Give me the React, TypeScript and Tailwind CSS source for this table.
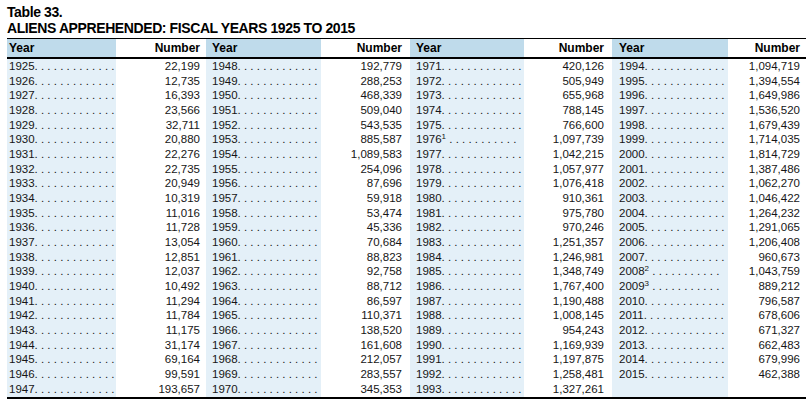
const groups: { rows: [string, string, string?][]; yearW: string; numW: string; yearPl: string; numPr: string }[] = [
  {
    yearW: 'w-[109px]',
    numW: 'w-[90px]',
    yearPl: 'pl-[2px]',
    numPr: 'pr-[6px]',
    rows: [
      ['1925', '22,199'], ['1926', '12,735'], ['1927', '16,393'], ['1928', '23,566'], ['1929', '32,711'],
      ['1930', '20,880'], ['1931', '22,276'], ['1932', '22,735'], ['1933', '20,949'], ['1934', '10,319'],
      ['1935', '11,016'], ['1936', '11,728'], ['1937', '13,054'], ['1938', '12,851'], ['1939', '12,037'],
      ['1940', '10,492'], ['1941', '11,294'], ['1942', '11,784'], ['1943', '11,175'], ['1944', '31,174'],
      ['1945', '69,164'], ['1946', '99,591'], ['1947', '193,657'],
    ],
  },
  {
    yearW: 'w-[115px]',
    numW: 'w-[89px]',
    yearPl: 'pl-[6px]',
    numPr: 'pr-[8px]',
    rows: [
      ['1948', '192,779'], ['1949', '288,253'], ['1950', '468,339'], ['1951', '509,040'], ['1952', '543,535'],
      ['1953', '885,587'], ['1954', '1,089,583'], ['1955', '254,096'], ['1956', '87,696'], ['1957', '59,918'],
      ['1958', '53,474'], ['1959', '45,336'], ['1960', '70,684'], ['1961', '88,823'], ['1962', '92,758'],
      ['1963', '88,712'], ['1964', '86,597'], ['1965', '110,371'], ['1966', '138,520'], ['1967', '161,608'],
      ['1968', '212,057'], ['1969', '283,557'], ['1970', '345,353'],
    ],
  },
  {
    yearW: 'w-[114px]',
    numW: 'w-[88px]',
    yearPl: 'pl-[6px]',
    numPr: 'pr-[8px]',
    rows: [
      ['1971', '420,126'], ['1972', '505,949'], ['1973', '655,968'], ['1974', '788,145'], ['1975', '766,600'],
      ['1976', '1,097,739', '1'], ['1977', '1,042,215'], ['1978', '1,057,977'], ['1979', '1,076,418'], ['1980', '910,361'],
      ['1981', '975,780'], ['1982', '970,246'], ['1983', '1,251,357'], ['1984', '1,246,981'], ['1985', '1,348,749'],
      ['1986', '1,767,400'], ['1987', '1,190,488'], ['1988', '1,008,145'], ['1989', '954,243'], ['1990', '1,169,939'],
      ['1991', '1,197,875'], ['1992', '1,258,481'], ['1993', '1,327,261'],
    ],
  },
  {
    yearW: 'w-[116px]',
    numW: 'w-[78px]',
    yearPl: 'pl-[7px]',
    numPr: 'pr-[6px]',
    rows: [
      ['1994', '1,094,719'], ['1995', '1,394,554'], ['1996', '1,649,986'], ['1997', '1,536,520'], ['1998', '1,679,439'],
      ['1999', '1,714,035'], ['2000', '1,814,729'], ['2001', '1,387,486'], ['2002', '1,062,270'], ['2003', '1,046,422'],
      ['2004', '1,264,232'], ['2005', '1,291,065'], ['2006', '1,206,408'], ['2007', '960,673'], ['2008', '1,043,759', '2'],
      ['2009', '889,212', '3'], ['2010', '796,587'], ['2011', '678,606'], ['2012', '671,327'], ['2013', '662,483'],
      ['2014', '679,996'], ['2015', '462,388'], ['', ''],
    ],
  },
];

const DOTS = ' . . . . . . . . . . . .';

export default function App() {
  return (
    <div className="w-[812px] h-[401px] bg-white pl-[7px] pt-[4px] text-[#161616] font-['Liberation_Sans',Arial,sans-serif]">
      <div className="h-[34px] text-[14px] leading-4 font-bold tracking-[-0.4px] text-black">
        <div>Table 33.</div>
        <div>ALIENS APPREHENDED: FISCAL YEARS 1925 TO 2015</div>
      </div>
      <div className="w-[799px] flex flex-col">
        <div className="h-[1px] bg-black" />
        {/* header */}
        <div className="flex h-[18px] text-[12px] font-bold leading-[18px] text-black">
          {groups.map((g, i) => (
            <div key={i} className="flex">
              <div className={`${g.yearW} ${g.yearPl} bg-[#bfdbeb]`}>Year</div>
              <div className={`${g.numW} ${g.numPr} text-right`}>Number</div>
            </div>
          ))}
        </div>
        <div className="h-[2px] bg-black" />
        {/* body */}
        <div className="flex h-[338px] text-[11.5px] leading-[14.68px]">
          {groups.map((g, i) => (
            <div key={i} className="flex">
              <div className={`${g.yearW} ${g.yearPl} bg-[#e4f0f8]`}>
                {g.rows.map(([year, , note], j) => (
                  <div key={j} className="h-[14.68px] whitespace-nowrap overflow-hidden">
                    {year && (
                      <>
                        {year}
                        {note ? (
                          <>
                            <sup className="text-[8px] relative top-[-4px]">{note}</sup>
                            {DOTS.slice(2)}
                          </>
                        ) : (
                          '.' + DOTS
                        )}
                      </>
                    )}
                  </div>
                ))}
              </div>
              <div className={`${g.numW} ${g.numPr} text-right`}>
                {g.rows.map(([, num], j) => (
                  <div key={j} className="h-[14.68px] whitespace-nowrap">
                    {num}
                  </div>
                ))}
              </div>
            </div>
          ))}
        </div>
        <div className="h-[2px] bg-black" />
      </div>
    </div>
  );
}
